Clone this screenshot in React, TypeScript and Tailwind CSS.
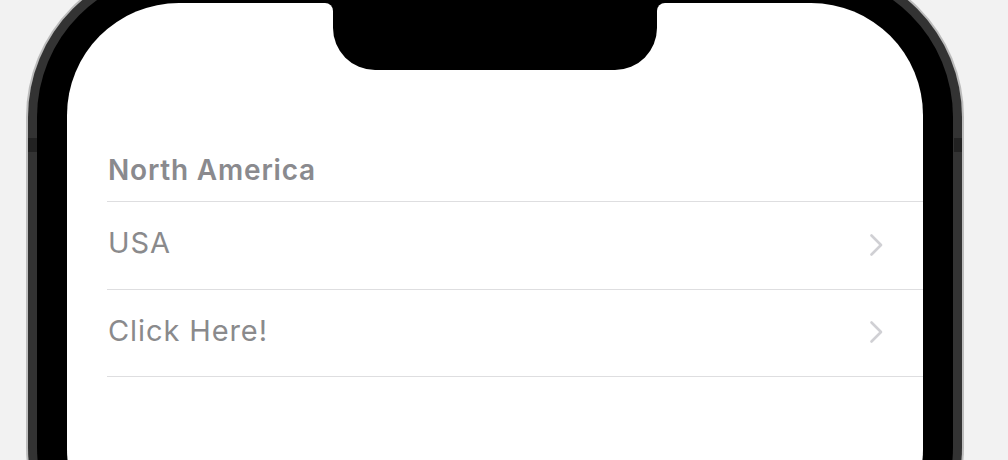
const rows = ["USA", "Click Here!"];

export default function App() {
  return (
    <div className="h-[460px] w-[1008px] overflow-hidden bg-[#f2f2f2] [font-family:Inter,'Noto_Sans',sans-serif]">
      <Phone>
        <div className="pt-[84px]">
          <h2 className="pl-[41px] text-[28px] font-semibold leading-[32px] tracking-[0.8px] text-[#8a8a8e]">
            North America
          </h2>
          <ul className="mt-[15px] ml-[40px] border-t border-[#dedee0]">
            {rows.map((r) => (
              <li
                key={r}
                className="flex h-[88px] items-center justify-between border-b border-[#dedee0] pb-[5px] pl-[1px] pr-[40px] last:h-[87px]"
              >
                <span className="text-[29px] leading-[32px] tracking-[0.9px] text-[#8a8a8c]">{r}</span>
                <Chevron />
              </li>
            ))}
          </ul>
        </div>
      </Phone>
    </div>
  );
}

function Chevron() {
  return (
    <svg width="14" height="24" viewBox="0 0 14 24" fill="none" className="mt-[3px]">
      <path
        d="M2.5 2.5 L12 12 L2.5 21.5"
        stroke="#d0d0d4"
        strokeWidth="2.6"
        strokeLinecap="round"
        strokeLinejoin="round"
      />
    </svg>
  );
}

function Phone({ children }: { children: React.ReactNode }) {
  return (
    <div className="relative ml-[26px] mt-[-38px] h-[640px] w-[938px] rounded-[155px] bg-[#bcbcbc] p-[2px]">
      {/* side buttons */}
      <div className="absolute left-[2px] top-[176px] h-[14px] w-[9px] bg-[#222]" />
      <div className="absolute right-[2px] top-[176px] h-[14px] w-[8px] bg-[#222]" />
      <div className="h-full w-full rounded-[153px] bg-[#333] p-[9px]">
        <div className="h-full w-full rounded-[144px] bg-black p-[30px]">
          <div className="flex h-full w-full flex-col overflow-hidden rounded-[112px] bg-white">
            <div className="flex h-[67px] shrink-0 justify-center">
              <div className="h-[8px] w-[8px] bg-black">
                <div className="h-full w-full rounded-tr-[8px] bg-white" />
              </div>
              <div className="h-full w-[324px] rounded-b-[42px] bg-black" />
              <div className="h-[8px] w-[8px] bg-black">
                <div className="h-full w-full rounded-tl-[8px] bg-white" />
              </div>
            </div>
            {children}
          </div>
        </div>
      </div>
    </div>
  );
}
